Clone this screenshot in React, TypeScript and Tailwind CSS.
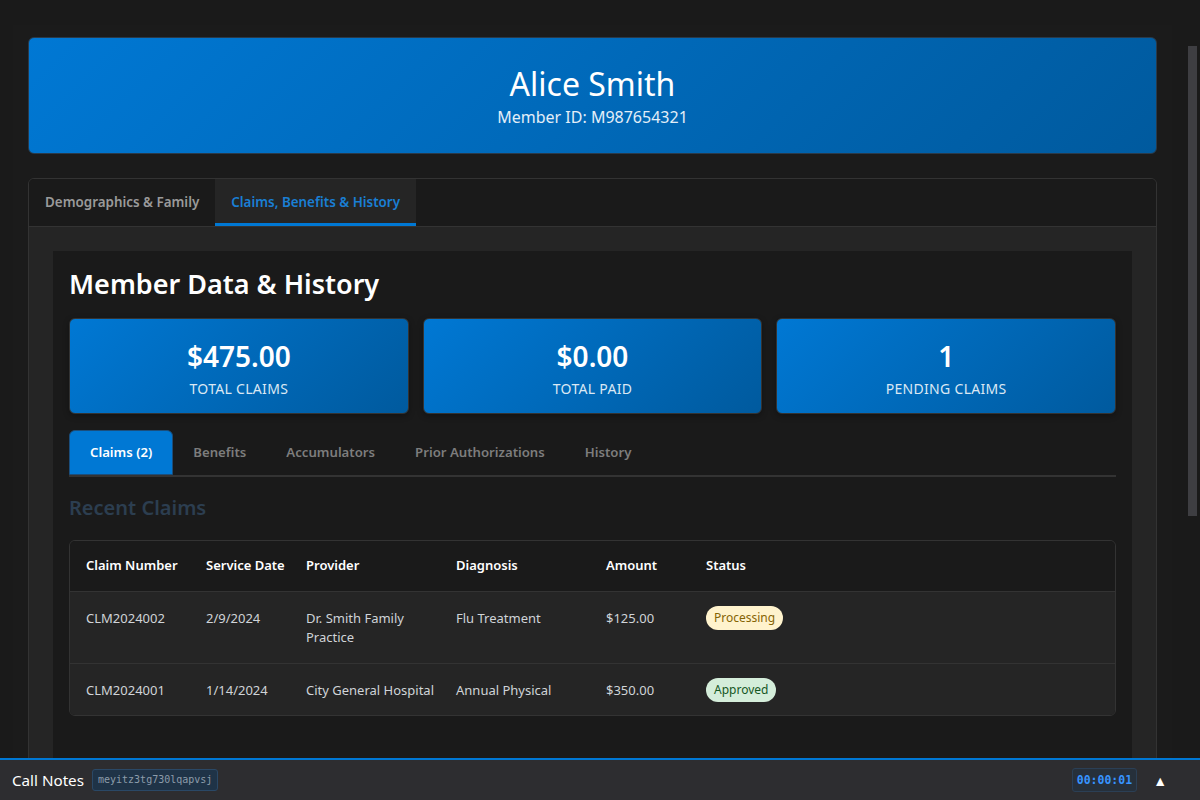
import React from "react";

const stats = [
  { value: "$475.00", label: "TOTAL CLAIMS" },
  { value: "$0.00", label: "TOTAL PAID" },
  { value: "1", label: "PENDING CLAIMS" },
];

const claims = [
  {
    num: "CLM2024002",
    date: "2/9/2024",
    provider: "Dr. Smith Family Practice",
    diag: "Flu Treatment",
    amount: "$125.00",
    status: "Processing",
  },
  {
    num: "CLM2024001",
    date: "1/14/2024",
    provider: "City General Hospital",
    diag: "Annual Physical",
    amount: "$350.00",
    status: "Approved",
  },
];

function Badge({ status }: { status: string }) {
  if (status === "Processing") {
    return (
      <span className="inline-block rounded-full bg-[#fff3cd] px-2 py-[3px] text-[12px] leading-[18px] text-[#856404]">
        {status}
      </span>
    );
  }
  return (
    <span className="inline-block rounded-full bg-[#d4edda] px-2 py-[3px] text-[12px] leading-[18px] text-[#155724]">
      {status}
    </span>
  );
}

export default function App() {
  return (
    <div
      className="flex h-[800px] w-[1200px] flex-col overflow-hidden bg-[#1a1a1a] text-white"
      style={{ fontFamily: '"Noto Sans", "Open Sans", sans-serif' }}
    >
      <div className="flex min-h-0 flex-1">
        <div className="ml-[13px] mt-[25px] w-[1159px] overflow-hidden bg-[#1b1b1b] px-[15px] pt-[12px]">
          {/* Header */}
          <div className="rounded-md border border-[#2a3a4a] bg-[linear-gradient(135deg,#0078d4,#005a9e)] pb-[24px] pt-[26px] text-center">
            <div className="text-[32px] leading-[40px] font-normal">Alice Smith</div>
            <div className="mt-[1px] text-[16px] leading-[24px] text-[#e3eef8]">Member ID: M987654321</div>
          </div>

          {/* Main tabs card */}
          <div className="mt-[24px] overflow-hidden rounded-md border border-[#333]">
            <div className="flex h-[48px] border-b border-[#333] bg-[#1a1a1a] text-[13.4px] font-semibold">
              <div className="flex items-center px-4 text-[#9a9a9a]">Demographics &amp; Family</div>
              <div className="flex items-center border-b-[3px] border-[#0078d4] bg-[#252525] px-4 pt-[3px] text-[#1a7fd4]">
                Claims, Benefits &amp; History
              </div>
            </div>
            <div className="bg-[#252525] p-6 pb-0">
              <div className="h-[600px] bg-[#1a1a1a] px-4 pt-4">
                <h2 className="text-[27px] leading-[34px] font-semibold text-white">Member Data &amp; History</h2>
                <div className="mt-[17px] grid grid-cols-3 gap-[14px]">
                  {stats.map((s) => (
                    <div
                      key={s.label}
                      className="rounded-md border border-[#333] bg-[linear-gradient(135deg,#0078d4,#005a9e)] pb-[16px] pt-[20px] text-center shadow-[0_2px_6px_rgba(0,0,0,0.3)]"
                    >
                      <div className="text-[28px] leading-[34px] font-semibold text-white">{s.value}</div>
                      <div className="mt-[7px] text-[14px] leading-[17px] tracking-[0.3px] text-[#dbe8f4]">{s.label}</div>
                    </div>
                  ))}
                </div>

                {/* Sub tabs */}
                <div className="mt-[16px] flex border-b-2 border-[#333] text-[13.2px] font-semibold">
                  <div className="flex h-[45px] items-center rounded-t-md border border-[#1b4e7c] bg-[#0078d4] px-5 text-white">
                    Claims (2)
                  </div>
                  <div className="flex h-[45px] items-center px-5 text-[#7d7d7d]">Benefits</div>
                  <div className="flex h-[45px] items-center px-5 text-[#7d7d7d]">Accumulators</div>
                  <div className="flex h-[45px] items-center px-5 text-[#7d7d7d]">Prior Authorizations</div>
                  <div className="flex h-[45px] items-center px-5 text-[#7d7d7d]">History</div>
                </div>

                <h3 className="mt-[19px] text-[20px] leading-[24px] font-semibold text-[#2c3e50]">Recent Claims</h3>

                <div className="mt-[20px] overflow-hidden rounded-md border border-[#333] text-[13px] leading-[19.5px]">
                  <div className="grid grid-cols-[120px_100px_150px_150px_100px_1fr] bg-[#1a1a1a] py-[15px] pl-4 font-semibold text-white">
                    <div>Claim Number</div>
                    <div>Service Date</div>
                    <div>Provider</div>
                    <div>Diagnosis</div>
                    <div>Amount</div>
                    <div>Status</div>
                  </div>
                  {claims.map((c) => (
                    <div
                      key={c.num}
                      className="grid grid-cols-[120px_100px_150px_150px_100px_1fr] border-t border-[#333] bg-[#252525] pb-[15px] pt-[17px] pl-4 text-[#d0d4d8]"
                    >
                      <div>{c.num}</div>
                      <div>{c.date}</div>
                      <div className="pr-2">{c.provider}</div>
                      <div>{c.diag}</div>
                      <div>{c.amount}</div>
                      <div className="-mt-[3px] h-[19.5px] leading-none">
                        <Badge status={c.status} />
                      </div>
                    </div>
                  ))}
                </div>
              </div>
            </div>
          </div>
        </div>
        {/* scrollbar */}
        <div className="flex w-[28px] justify-end bg-[#1a1a1a] pr-[3px] pt-[46px]">
          <div className="h-[470px] w-[9px] bg-[#3e3e42]" />
        </div>
      </div>

      {/* Bottom bar */}
      <div className="flex h-[42px] shrink-0 items-center border-t-2 border-[#0078d4] bg-[#2d2d30] pl-3 pr-[33px]">
        <span className="text-[15.2px] text-white">Call Notes</span>
        <span
          className="ml-[8px] rounded-[3px] border border-[#2a4866] bg-[#1f3347] px-[5px] py-[2px] text-[10px] leading-[16px] text-[#8d9caa]"
          style={{ fontFamily: '"DejaVu Sans Mono", monospace' }}
        >
          meyitz3tg730lqapvsj
        </span>
        <div className="flex-1" />
        <span
          className="rounded-[3px] border border-[#2b3f55] bg-[#26303b] px-[4px] py-[2px] text-[11.5px] font-bold leading-[18px] text-[#3794ff]"
          style={{ fontFamily: '"DejaVu Sans Mono", monospace' }}
        >
          00:00:01
        </span>
        <span className="ml-[16px] text-[14px] text-white">▲</span>
      </div>
    </div>
  );
}
